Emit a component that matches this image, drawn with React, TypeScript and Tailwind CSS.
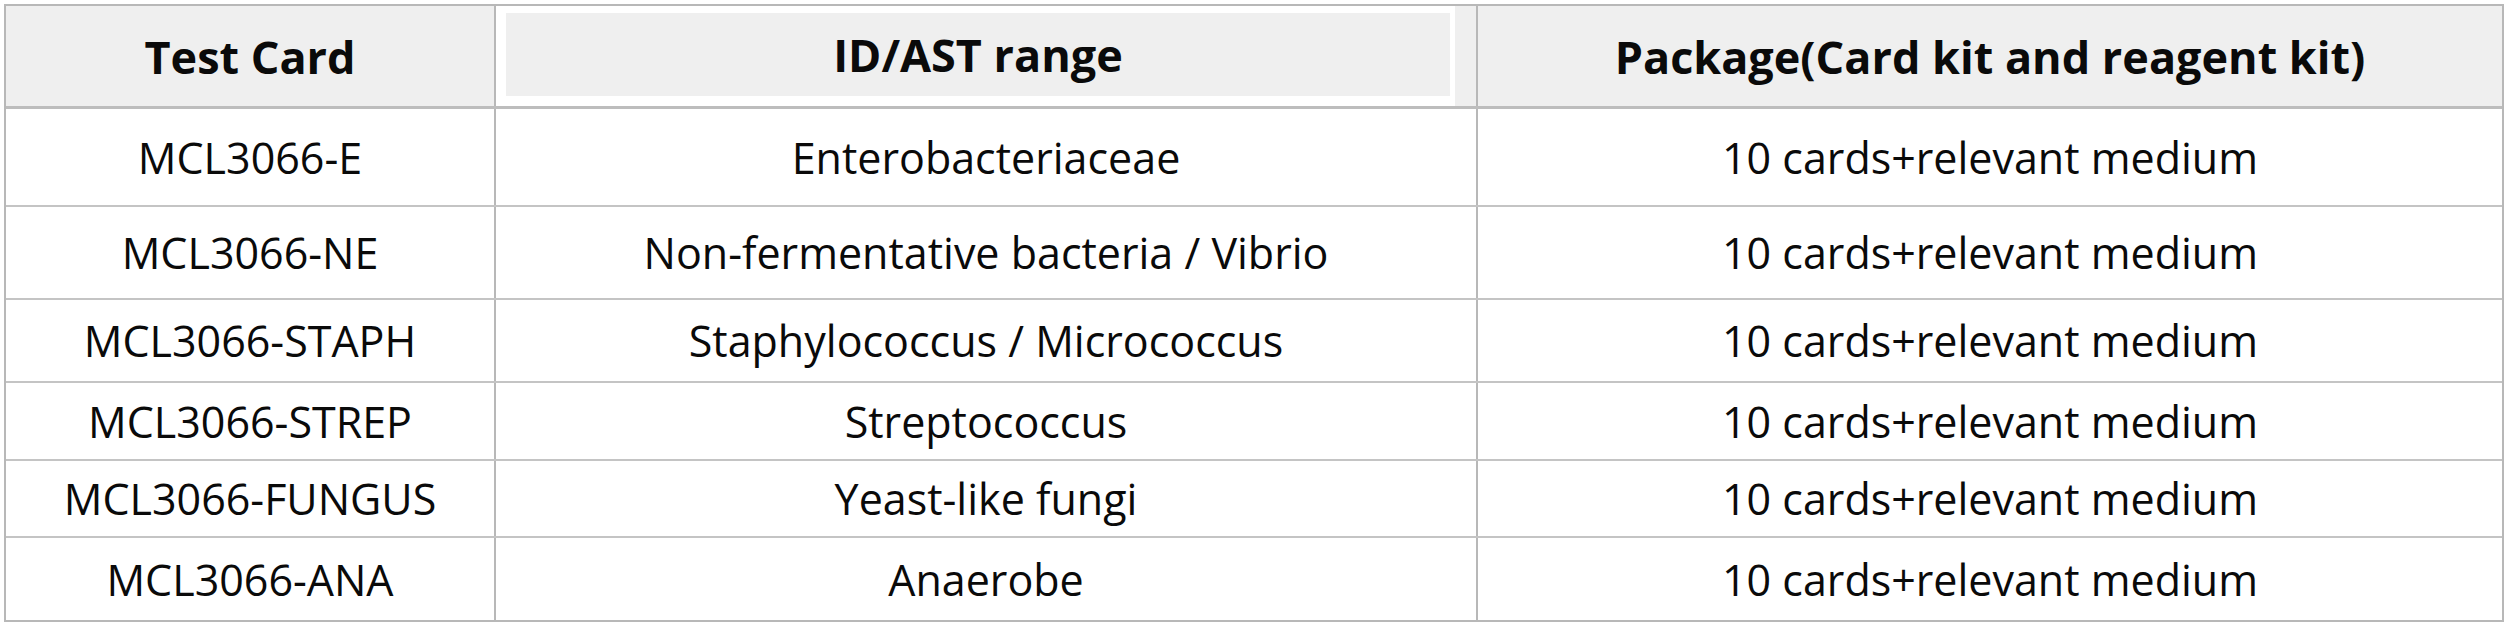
import React from "react";

const rows = [
  { card: "MCL3066-E", range: "Enterobacteriaceae", h: "h-[98px]" },
  { card: "MCL3066-NE", range: "Non-fermentative bacteria / Vibrio", h: "h-[93px]" },
  { card: "MCL3066-STAPH", range: "Staphylococcus / Micrococcus", h: "h-[83px]" },
  { card: "MCL3066-STREP", range: "Streptococcus", h: "h-[78px]" },
  { card: "MCL3066-FUNGUS", range: "Yeast-like fungi", h: "h-[77px]" },
  { card: "MCL3066-ANA", range: "Anaerobe", h: "h-[82px]" },
];

function T({ children, bold }: { children: React.ReactNode; bold?: boolean }) {
  return (
    <span
      className={
        "inline-block whitespace-nowrap text-[#0a0a0a] " +
        (bold ? "font-bold text-[45px]" : "font-normal text-[43px]")
      }
    >
      {children}
    </span>
  );
}

export default function App() {
  return (
    <div
      className="w-[2508px] h-[627px] bg-white pt-[4px] pl-[4px]"
      style={{ fontFamily: '"Open Sans", "Liberation Sans", sans-serif' }}
    >
      <div className="w-[2500px] border-2 border-[#b8b8b8] flex flex-col leading-none">
        <div className="flex h-[103px] bg-[#efefef] border-b-[3px] border-[#bdbdbd]">
          <div className="w-[490px] flex items-center justify-center border-r-2 border-[#b8b8b8]">
            <T bold>Test Card</T>
          </div>
          <div className="w-[982px] flex border-r-2 border-[#b8b8b8] pr-[21px]">
            <div className="flex-1 bg-white pt-[7px] pl-[10px] pr-[5px] pb-[10px] flex">
              <div className="flex-1 bg-[#efefef] flex items-center justify-center">
                <T bold>ID/AST range</T>
              </div>
            </div>
          </div>
          <div className="flex-1 flex items-center justify-center">
            <T bold>Package(Card kit and reagent kit)</T>
          </div>
        </div>
        {rows.map((r, i) => (
          <div
            key={r.card}
            className={
              "flex " + r.h + (i < rows.length - 1 ? " border-b-2 border-[#c4c4c4]" : "")
            }
          >
            <div className="w-[490px] flex items-center justify-center border-r-2 border-[#b8b8b8]">
              <T>{r.card}</T>
            </div>
            <div className="w-[982px] flex items-center justify-center border-r-2 border-[#b8b8b8]">
              <T>{r.range}</T>
            </div>
            <div className="flex-1 flex items-center justify-center">
              <T>10 cards+relevant medium</T>
            </div>
          </div>
        ))}
      </div>
    </div>
  );
}
